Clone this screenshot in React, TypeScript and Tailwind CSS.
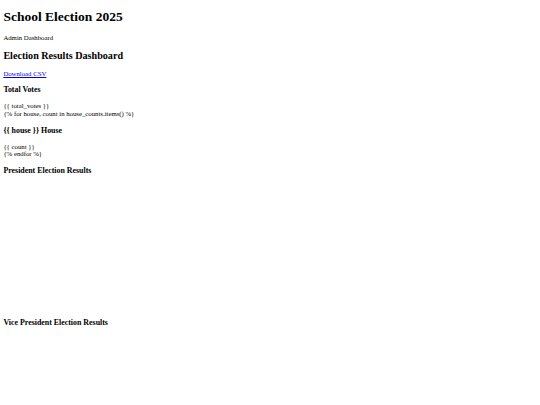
export default function App() {
  return (
    <div className="m-[3.375px] bg-white text-black text-[6.75px] leading-[1.149] font-['Liberation_Serif','Times_New_Roman',serif]">
      <h1 className="text-[13.5px] leading-[1.149] font-bold my-[9.045px]">School Election 2025</h1>
      <p className="my-[6.75px]">Admin Dashboard</p>

      <h2 className="text-[10.125px] leading-[1.149] font-bold my-[8.4px]">Election Results Dashboard</h2>
      <p className="my-[6.75px]">
        <a href="#" className="text-[#0000ee] underline">
          Download CSV
        </a>
      </p>

      <h3 className="text-[7.9px] leading-[1.149] font-bold my-[7.9px]">Total Votes</h3>
      <p className="my-[6.75px]">
        {"{{ total_votes }}"}
        <br />
        {"{% for house, count in house_counts.items() %}"}
      </p>

      <h3 className="text-[7.9px] leading-[1.149] font-bold my-[7.9px]">{"{{ house }} House"}</h3>
      <p className="my-[6.75px]">
        {"{{ count }}"}
        <br />
        {"{% endfor %}"}
      </p>

      <h3 className="text-[7.9px] leading-[1.149] font-bold my-[7.9px]">President Election Results</h3>
      <canvas className="block w-full h-[126.6px]" />

      <h3 className="text-[7.9px] leading-[1.149] font-bold my-[7.9px]">Vice President Election Results</h3>
      <canvas className="block w-full h-[126.6px]" />
    </div>
  );
}
